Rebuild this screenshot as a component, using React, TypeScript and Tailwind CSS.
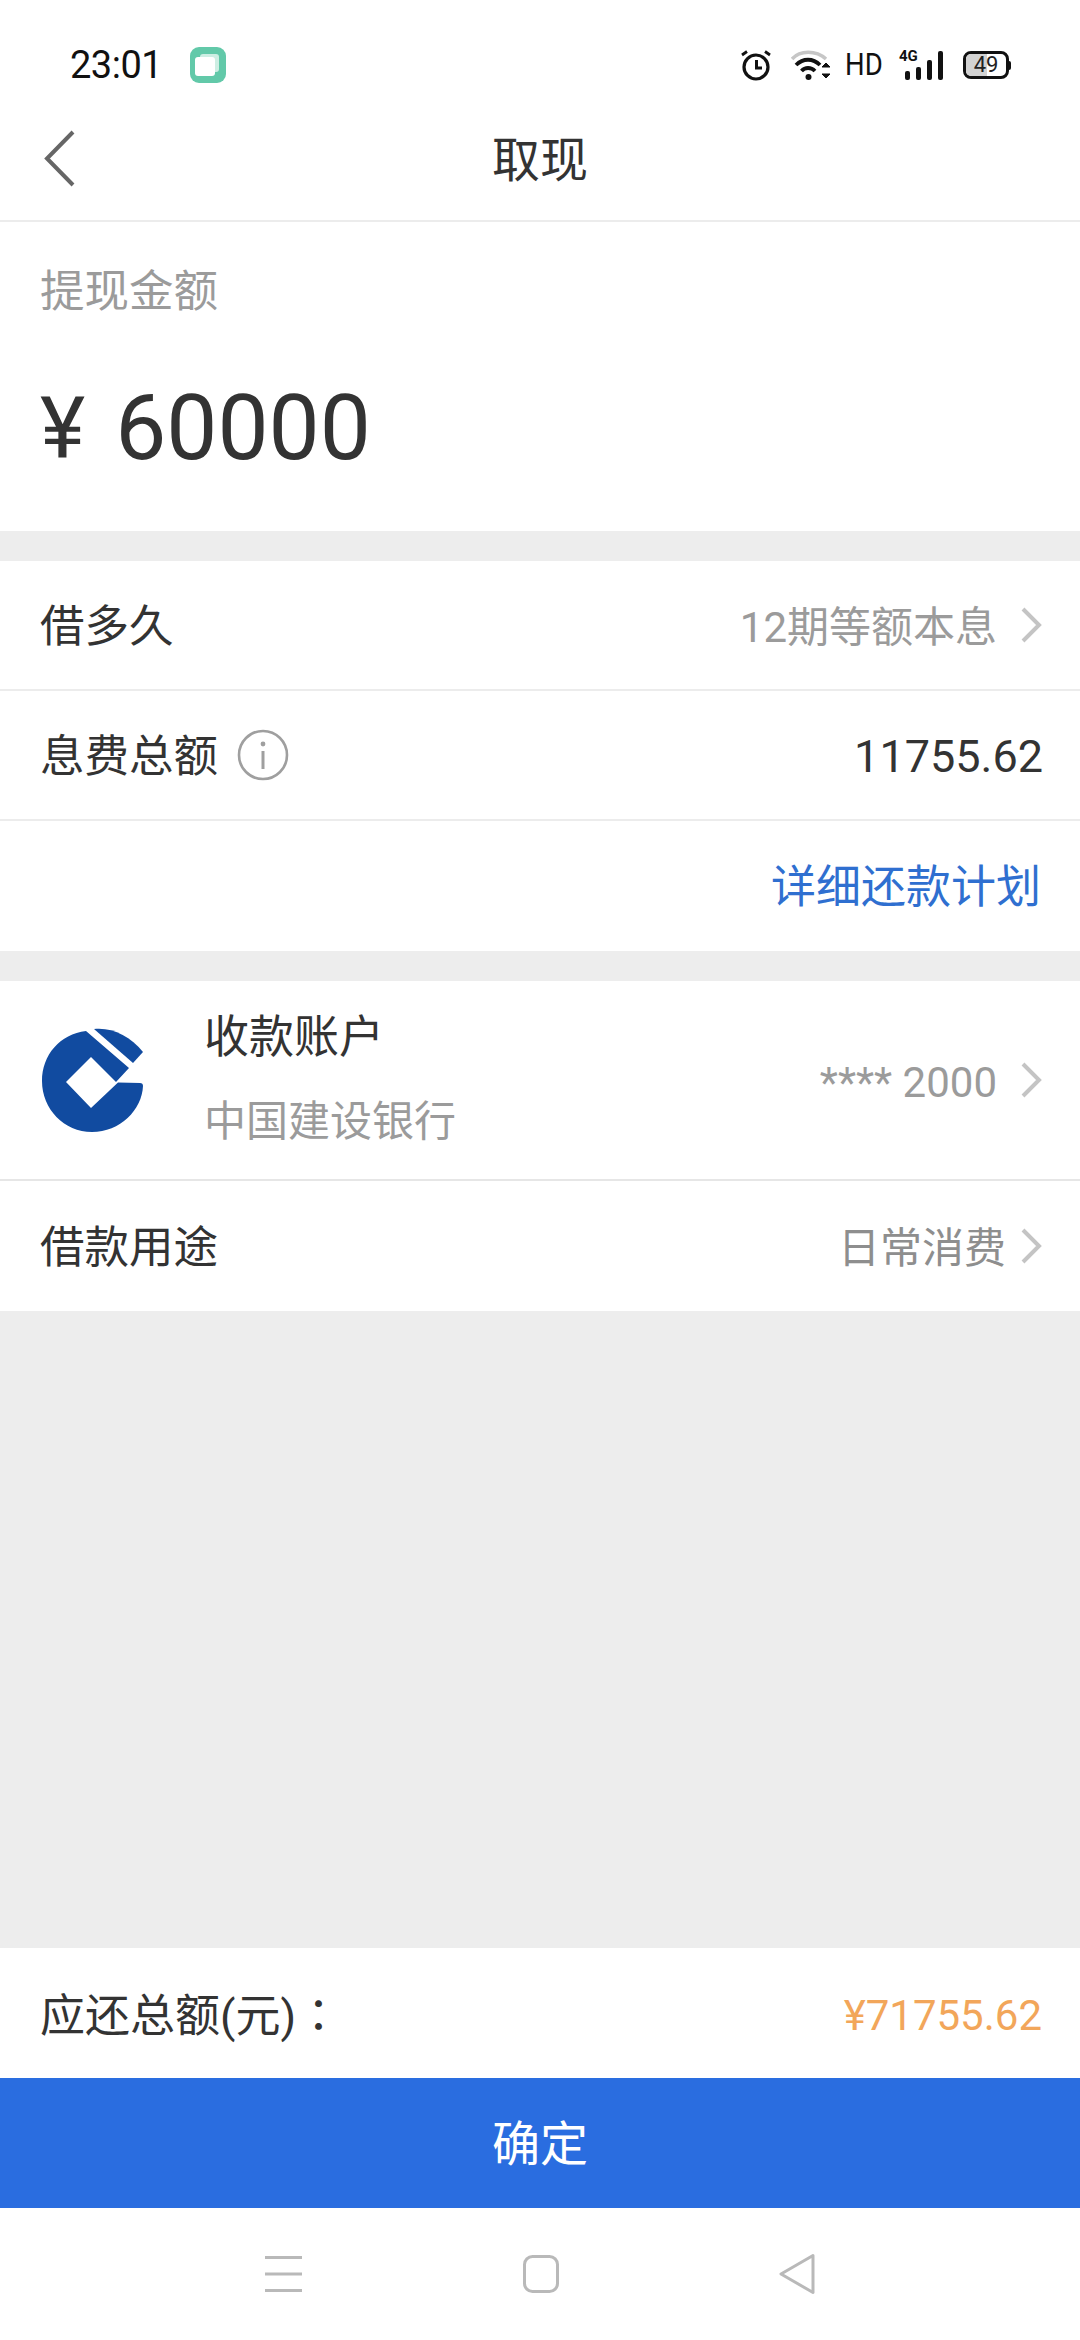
const CJK = "font-['Roboto','Noto_Sans_CJK_SC',sans-serif]";

function Chevron() {
  return (
    <svg width="24" height="38" viewBox="0 0 24 38" className="shrink-0">
      <path d="M4 3 L20 19 L4 35" fill="none" stroke="#c4c4c4" strokeWidth="4" />
    </svg>
  );
}

function StatusIcons() {
  return (
    <div className="flex items-center">
      <svg width="30" height="31" viewBox="0 0 30 31" className="mr-[20px]">
        <circle cx="15" cy="17" r="12" fill="none" stroke="#111" strokeWidth="3.2" />
        <path d="M15.5 10 V18 H21" fill="none" stroke="#111" strokeWidth="3" />
        <path d="M1 5 L6 1.5 M29 5 L24 1.5" fill="none" stroke="#111" strokeWidth="2.8" />
      </svg>
      <svg width="40" height="31" viewBox="0 0 40 31" className="mr-[14px]">
        <path d="M1 9 C9 0 25 0 35 9" fill="none" stroke="#c6c6c6" strokeWidth="3.6" />
        <path d="M5 15 C12 8 22 8 29 15" fill="none" stroke="#111" strokeWidth="3.8" />
        <path d="M10.5 21 C14 17 20 17 24 21" fill="none" stroke="#111" strokeWidth="3.8" />
        <circle cx="17.5" cy="27" r="3" fill="#111" />
        <path d="M31 17 L35 13 L39 17 Z M31 24 L35 28 L39 24 Z" fill="#111" stroke="#111" />
      </svg>
      <div className="mr-[18px] w-[36px] overflow-visible whitespace-nowrap">
        <span className="inline-block origin-left scale-x-[0.86] font-['Roboto',sans-serif] text-[32px] leading-none text-[#111]">HD</span>
      </div>
      <div className="mr-[20px] flex h-[31px] w-[44px] flex-col">
        <span className="h-[12px] font-['Roboto',sans-serif] text-[15px] font-bold leading-[12px] text-[#111]">4G</span>
        <svg width="44" height="19" viewBox="0 0 44 19" className="overflow-visible">
          <rect x="6" y="9" width="5" height="9" rx="2" fill="#111" />
          <rect x="17" y="5" width="5" height="13" rx="2" fill="#111" />
          <rect x="28" y="-2" width="5" height="20" rx="2" fill="#111" />
          <rect x="39" y="-11" width="5" height="29" rx="2" fill="#111" />
        </svg>
      </div>
      <div className="relative flex h-[28px] w-[46px] items-center overflow-hidden rounded-[8px] border-[3px] border-[#111] bg-white">
        <div className="h-full w-[21px] bg-[#d2d2d2]" />
        <span className="absolute inset-0 flex items-center justify-center font-['Roboto',sans-serif] text-[22px] leading-none text-[#222]">49</span>
      </div>
      <div className="h-[9px] w-[2px] rounded-r-sm bg-[#111]" />
    </div>
  );
}

function Row({ className = "", children }: { className?: string; children: React.ReactNode }) {
  return <div className={`flex items-center justify-between bg-white pl-10 pr-[37px] ${className}`}>{children}</div>;
}

export default function App() {
  return (
    <div className={`${CJK} flex h-[2340px] w-[1080px] flex-col bg-[#ededed] text-[#333]`}>
      <div className="flex h-[130px] items-center justify-between bg-white pl-[70px] pr-[69px]">
        <div className="flex items-center">
          <span className="font-['Roboto',sans-serif] text-[38px] leading-none tracking-[-0.5px] text-[#111]">23:01</span>
          <div className="relative ml-[28px] flex h-9 w-9 items-center justify-center rounded-[9px] bg-[#62c9a9]">
            <div className="absolute left-[10px] top-[7px] h-[18px] w-[19px] rounded-[3px] bg-[#cdeee3]" />
            <div className="absolute left-[5px] top-[10px] h-[19px] w-[20px] rounded-[3px] bg-white" />
          </div>
        </div>
        <StatusIcons />
      </div>
      <div className="relative flex h-[92px] items-center justify-center border-b-2 border-[#ececec] bg-white pb-[28px]">
        <svg width="32" height="58" viewBox="0 0 32 58" className="absolute left-[44px] top-0">
          <path d="M29 2 L3 28.5 L29 55" fill="none" stroke="#666" strokeWidth="4" />
        </svg>
        <span className="text-[48px] leading-none">取现</span>
      </div>

      <div className="flex h-[309px] flex-col bg-white pl-10">
        <div className="mt-[40px] text-[44.5px] leading-[60px] text-[#9b9b9b]">提现金额</div>
        <div className="mt-[51px] flex items-center leading-[110px] text-[#333]">
          <span className="text-[86px]">¥</span>
          <span className="ml-[30px] text-[91px]">60000</span>
        </div>
      </div>

      <div className="mt-[30px]">
        <Row className="h-[130px] border-b-2 border-[#ececec]">
          <span className="pt-1 text-[44.5px]">借多久</span>
          <div className="flex items-center gap-[22px]">
            <span className="pt-1 text-[42px] text-[#9b9b9b]">12期等额本息</span>
            <Chevron />
          </div>
        </Row>
        <Row className="h-[130px] border-b-2 border-[#ececec]">
          <div className="flex items-center gap-[19px]">
            <span className="pt-1 text-[44.5px]">息费总额</span>
            <svg width="52" height="52" viewBox="0 0 52 52">
              <circle cx="26" cy="26" r="24" fill="none" stroke="#9f9f9f" strokeWidth="2.6" />
              <rect x="24.5" y="22" width="3" height="18" fill="#9f9f9f" />
              <circle cx="26" cy="15" r="2.4" fill="#9f9f9f" />
            </svg>
          </div>
          <span className="pt-1 text-[45px] text-[#333]">11755.62</span>
        </Row>
        <Row className="h-[130px] justify-end pr-[39px]">
          <span className="pt-1 text-[45px] text-[#2f6fd0]">详细还款计划</span>
        </Row>
      </div>

      <div className="mt-[30px]">
        <Row className="h-[200px] border-b-2 border-[#e6e6e6]">
          <div className="flex items-center">
            <svg width="102" height="104" viewBox="0 0 102 104" className="ml-[2px]">
              <path fill="#114ba0" d="M44 3 C18 6 0 27 0 53 C0 81 22 104 50 104 C78 104 100 82 101 58 C101 56 100 55 98 55 L76 54.5 L49 80 L24 54 L49 29 L74 54 L87 40 Z" />
              <path fill="#114ba0" d="M52 1 C70 -1 88 8 101 24 L91 35 Z" />
            </svg>
            <div className="ml-[60px] flex flex-col">
              <span className="text-[45px] leading-[56px]">收款账户</span>
              <span className="mt-[28px] text-[42px] leading-[56px] text-[#9b9b9b]">中国建设银行</span>
            </div>
          </div>
          <div className="flex items-center gap-[22px]">
            <span className="pt-1 text-[42px] text-[#9b9b9b]">**** 2000</span>
            <Chevron />
          </div>
        </Row>
        <Row className="h-[130px]">
          <span className="pt-1 text-[44.5px]">借款用途</span>
          <div className="flex items-center gap-[13px]">
            <span className="pt-1 text-[42px] text-[#8e8e8e]">日常消费</span>
            <Chevron />
          </div>
        </Row>
      </div>

      <div className="flex-1" />

      <div className="flex h-[130px] items-center justify-between bg-white pl-10 pr-[38px]">
        <span className="pt-1 text-[45px]">
          应还总额(元)<span className="font-['Noto_Sans_CJK_TC',sans-serif]">：</span>
        </span>
        <span className="pt-1 text-[42px] text-[#f2a65a]">¥71755.62</span>
      </div>
      <div className="flex h-[130px] items-center justify-center bg-[#2a6de0] pt-1 text-[48px] text-white">确定</div>
      <div className="flex h-[132px] items-center justify-center bg-white">
        <svg width="37" height="36" viewBox="0 0 37 36">
          <path d="M0 1.5 H37 M0 18 H37 M0 34.5 H37" stroke="#b9b9b9" strokeWidth="3" />
        </svg>
        <svg width="36" height="38" viewBox="0 0 36 38" className="ml-[221px]">
          <rect x="1.5" y="1.5" width="33" height="35" rx="8" fill="none" stroke="#b9b9b9" strokeWidth="3" />
        </svg>
        <svg width="38" height="42" viewBox="0 0 38 42" className="ml-[219px]">
          <path d="M35 2.5 L3 21 L35 39.5 Z" fill="none" stroke="#b9b9b9" strokeWidth="3" strokeLinejoin="round" />
        </svg>
      </div>
    </div>
  );
}
